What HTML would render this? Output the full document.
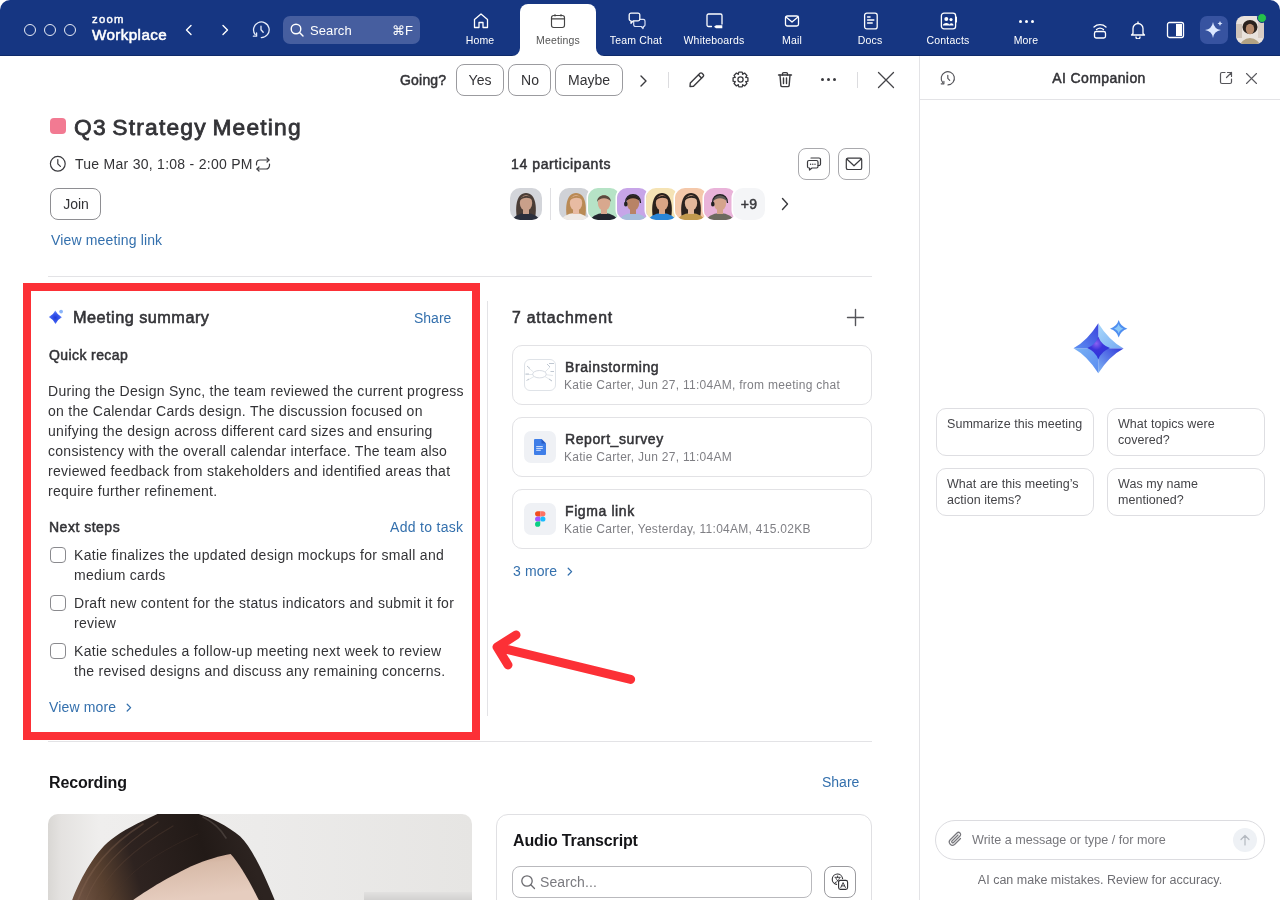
<!DOCTYPE html>
<html><head><meta charset="utf-8">
<style>
html,body{margin:0;padding:0;background:#fff;}
body{width:1280px;height:900px;overflow:hidden;position:relative;font-family:"Liberation Sans", sans-serif;}
.t{position:absolute;white-space:pre;line-height:1;will-change:transform;}
svg{display:block;}
</style></head><body>
<div style="position:absolute;left:0px;top:0px;width:1280px;height:56px;background:#163682;border-radius:10px 10px 0 0;"></div><div style="position:absolute;left:0px;top:55px;width:1280px;height:1px;background:#0f2a6a;"></div><div style="position:absolute;left:24px;top:24px;width:12px;height:12px;box-sizing:border-box;border:1.3px solid #e8ecf6;border-radius:50%;"></div><div style="position:absolute;left:44px;top:24px;width:12px;height:12px;box-sizing:border-box;border:1.3px solid #e8ecf6;border-radius:50%;"></div><div style="position:absolute;left:64px;top:24px;width:12px;height:12px;box-sizing:border-box;border:1.3px solid #e8ecf6;border-radius:50%;"></div><div class="t" style="left:92.30px;top:14.23px;font-size:11.3px;color:#fff;-webkit-text-stroke:0.40px #fff;letter-spacing:1.3px;">zoom</div><div class="t" style="left:92.30px;top:26.53px;font-size:15.2px;color:#fff;-webkit-text-stroke:0.54px #fff;letter-spacing:0.4px;">Workplace</div><svg style="position:absolute;left:184px;top:24px;" width="10" height="12" viewBox="0 0 10 12" fill="none"><path d="M7 1.5 L2.5 6 L7 10.5" stroke="#fff" stroke-width="1.4" stroke-linecap="round" stroke-linejoin="round"/></svg><svg style="position:absolute;left:220px;top:24px;" width="10" height="12" viewBox="0 0 10 12" fill="none"><path d="M3 1.5 L7.5 6 L3 10.5" stroke="#fff" stroke-width="1.4" stroke-linecap="round" stroke-linejoin="round"/></svg><svg style="position:absolute;left:252px;top:21px;" width="18" height="18" viewBox="0 0 18 18" fill="none"><path d="M9.3 16.6 A7.8 7.8 0 1 0 3.2 13.6" stroke="#e6ecfa" stroke-width="1.3" stroke-linecap="round" stroke-linejoin="round"/><path d="M1.4 15.2 H4.6 V12" stroke="#e6ecfa" stroke-width="1.3" stroke-linecap="round" stroke-linejoin="round"/><path d="M9 5.2 V8.7 L11.2 11.2" stroke="#e6ecfa" stroke-width="1.3" stroke-linecap="round" stroke-linejoin="round"/></svg><div style="position:absolute;left:283px;top:16px;width:137px;height:28px;background:#465e9f;border-radius:7px;"></div><svg style="position:absolute;left:289px;top:22px;" width="16" height="16" viewBox="0 0 16 16" fill="none"><circle cx="7" cy="7" r="4.8" stroke="#fff" stroke-width="1.4" stroke-linecap="round" stroke-linejoin="round"/><path d="M10.5 10.5 L14 14" stroke="#fff" stroke-width="1.4" stroke-linecap="round" stroke-linejoin="round"/></svg><div class="t" style="left:309.50px;top:23.80px;font-size:13px;color:#fff;letter-spacing:0.1px;">Search</div><div class="t" style="left:392.00px;top:23.80px;font-size:13px;color:#fff;">⌘F</div><div style="position:absolute;left:520px;top:4px;width:76px;height:52px;background:#fff;border-radius:8px 8px 0 0;"></div><svg style="position:absolute;left:512px;top:47px;" width="8" height="9" viewBox="0 0 8 9" fill="none"><path d="M8 0 V9 H0 A8 8 0 0 0 8 1 Z" fill="#fff"/></svg><svg style="position:absolute;left:596px;top:47px;" width="8" height="9" viewBox="0 0 8 9" fill="none"><path d="M0 0 V9 H8 A8 8 0 0 1 0 1 Z" fill="#fff"/></svg><div class="t" style="left:480.00px;transform:translateX(-50%);top:35.31px;font-size:10.5px;color:#fff;letter-spacing:0.18px;">Home</div><div class="t" style="left:558.00px;transform:translateX(-50%);top:35.31px;font-size:10.5px;color:#555;letter-spacing:0.18px;">Meetings</div><div class="t" style="left:636.00px;transform:translateX(-50%);top:35.31px;font-size:10.5px;color:#fff;letter-spacing:0.18px;">Team Chat</div><div class="t" style="left:714.00px;transform:translateX(-50%);top:35.31px;font-size:10.5px;color:#fff;letter-spacing:0.18px;">Whiteboards</div><div class="t" style="left:792.00px;transform:translateX(-50%);top:35.31px;font-size:10.5px;color:#fff;letter-spacing:0.18px;">Mail</div><div class="t" style="left:870.00px;transform:translateX(-50%);top:35.31px;font-size:10.5px;color:#fff;letter-spacing:0.18px;">Docs</div><div class="t" style="left:948.00px;transform:translateX(-50%);top:35.31px;font-size:10.5px;color:#fff;letter-spacing:0.18px;">Contacts</div><div class="t" style="left:1026.00px;transform:translateX(-50%);top:35.31px;font-size:10.5px;color:#fff;letter-spacing:0.18px;">More</div><svg style="position:absolute;left:473px;top:13px;" width="16" height="16" viewBox="0 0 16 16" fill="none"><path d="M1.5 6.5 L8 1 L14.5 6.5 V14.5 H10 V9.5 H6 V14.5 H1.5 Z" stroke="#fff" stroke-width="1.3" stroke-linecap="round" stroke-linejoin="round"/></svg><svg style="position:absolute;left:550px;top:13px;" width="16" height="16" viewBox="0 0 16 16" fill="none"><rect x="1.5" y="2.5" width="13" height="12" rx="2.2" stroke="#444" stroke-width="1.15" stroke-linecap="round" stroke-linejoin="round"/><path d="M1.5 5.8 H14.5" stroke="#444" stroke-width="1.15" stroke-linecap="round" stroke-linejoin="round"/><path d="M5 1.5 V3 M11 1.5 V3" stroke="#444" stroke-width="1.15" stroke-linecap="round" stroke-linejoin="round"/></svg><svg style="position:absolute;left:627px;top:12px;" width="20" height="18" viewBox="0 0 20 18" fill="none"><path d="M8.5 7.3 H16.2 A1.8 1.8 0 0 1 18 9.1 V12.7 A1.8 1.8 0 0 1 16.2 14.5 H16.5 L16 16.6 L14.3 14.5 H8.5 A1.8 1.8 0 0 1 6.7 12.7 V9.1 A1.8 1.8 0 0 1 8.5 7.3 Z" stroke="#d8e0f5" stroke-width="1.2" stroke-linecap="round" stroke-linejoin="round"/><path d="M4 1.1 H11 A1.8 1.8 0 0 1 12.8 2.9 V7.1 A1.8 1.8 0 0 1 11 8.9 H6.2 L4 11.3 V8.9 A1.8 1.8 0 0 1 2.2 7.1 V2.9 A1.8 1.8 0 0 1 4 1.1 Z" fill="#163682" stroke="#fff" stroke-width="1.3" stroke-linecap="round" stroke-linejoin="round"/></svg><svg style="position:absolute;left:705px;top:13px;" width="19" height="16" viewBox="0 0 19 16" fill="none"><path d="M6.5 13.5 H3.5 A1.5 1.5 0 0 1 2 12 V2.5 A1.5 1.5 0 0 1 3.5 1 H15.5 A1.5 1.5 0 0 1 17 2.5 V11" stroke="#fff" stroke-width="1.3" stroke-linecap="round" stroke-linejoin="round"/><path d="M9 13.8 L11 12.2 H17.3 V15.3 H11 Z" fill="#fff"/></svg><svg style="position:absolute;left:784px;top:14px;" width="16" height="14" viewBox="0 0 16 14" fill="none"><rect x="1.5" y="2" width="13" height="10" rx="1.8" stroke="#fff" stroke-width="1.3" stroke-linecap="round" stroke-linejoin="round"/><path d="M2 3 L8 8 L14 3" stroke="#fff" stroke-width="1.3" stroke-linecap="round" stroke-linejoin="round"/></svg><svg style="position:absolute;left:863px;top:12px;" width="16" height="18" viewBox="0 0 16 18" fill="none"><rect x="1.6" y="1.1" width="12.6" height="15.8" rx="2.2" stroke="#fff" stroke-width="1.3" stroke-linecap="round" stroke-linejoin="round"/><path d="M4.6 5 H7 M4.6 8 H10.8 M4.6 11 H9.2" stroke="#fff" stroke-width="1.5" stroke-linecap="round" stroke-linejoin="round"/></svg><svg style="position:absolute;left:940px;top:12px;" width="18" height="18" viewBox="0 0 18 18" fill="none"><rect x="1.4" y="1.1" width="14.2" height="15.8" rx="2.6" stroke="#fff" stroke-width="1.3" stroke-linecap="round" stroke-linejoin="round"/><path d="M16.4 5 V10" stroke="#fff" stroke-width="1.2" stroke-linecap="round" stroke-linejoin="round"/><circle cx="6.3" cy="7" r="2" fill="#fff"/><circle cx="11" cy="7.6" r="1.6" fill="#fff"/><path d="M2.8 13.5 C2.8 10 9.8 10 9.8 13.5 Z" fill="#fff"/><path d="M9.2 13.5 C9.2 10.5 13.5 10.5 13.5 13.5 Z" fill="#fff"/></svg><div style="position:absolute;left:1018.5px;top:19.5px;width:3px;height:3px;background:#fff;border-radius:50%;"></div><div style="position:absolute;left:1024.5px;top:19.5px;width:3px;height:3px;background:#fff;border-radius:50%;"></div><div style="position:absolute;left:1030.5px;top:19.5px;width:3px;height:3px;background:#fff;border-radius:50%;"></div><svg style="position:absolute;left:1092px;top:20px;" width="16" height="20" viewBox="0 0 16 20" fill="none"><path d="M2 7 A9 9 0 0 1 14 7" stroke="#fff" stroke-width="1.3" stroke-linecap="round" stroke-linejoin="round"/><path d="M4.5 9.5 A5.5 5.5 0 0 1 11.5 9.5" stroke="#fff" stroke-width="1.3" stroke-linecap="round" stroke-linejoin="round"/><rect x="2.5" y="11.5" width="11" height="6.5" rx="1.8" stroke="#fff" stroke-width="1.3" stroke-linecap="round" stroke-linejoin="round"/></svg><svg style="position:absolute;left:1129px;top:20px;" width="18" height="19" viewBox="0 0 18 19" fill="none"><path d="M4 13.5 V8.5 A5 5 0 0 1 14 8.5 V13.5 L15.5 15 H2.5 Z" stroke="#fff" stroke-width="1.3" stroke-linecap="round" stroke-linejoin="round"/><path d="M7 17 A2 2 0 0 0 11 17" stroke="#fff" stroke-width="1.3" stroke-linecap="round" stroke-linejoin="round"/><path d="M9 2 V3.5" stroke="#fff" stroke-width="1.3" stroke-linecap="round" stroke-linejoin="round"/></svg><svg style="position:absolute;left:1166px;top:21px;" width="19" height="18" viewBox="0 0 19 18" fill="none"><rect x="1.5" y="1.5" width="16" height="15" rx="2" stroke="#fff" stroke-width="1.3" stroke-linecap="round" stroke-linejoin="round"/><rect x="10" y="3" width="6" height="12" fill="#fff"/></svg><div style="position:absolute;left:1200px;top:16px;width:28px;height:28px;background:#3753a0;border-radius:7px;"></div><svg style="position:absolute;left:1203px;top:19px;" width="22" height="22" viewBox="0 0 22 22" fill="none"><path d="M10 3 Q11 10 18 11 Q11 12 10 19 Q9 12 2 11 Q9 10 10 3 Z" fill="#dce8ff"/><path d="M17 2 Q17.4 4.2 19.5 4.5 Q17.4 4.8 17 7 Q16.6 4.8 14.5 4.5 Q16.6 4.2 17 2 Z" fill="#dce8ff"/></svg><div style="position:absolute;left:1236px;top:16px;width:28px;height:28px;border-radius:8px;overflow:hidden;"><svg width="28" height="28" viewBox="0 0 28 28"><rect width="28" height="28" fill="#e9e2dc"/><rect x="0" y="8" width="6" height="14" fill="#cfc3b8"/><rect x="22" y="6" width="6" height="16" fill="#d8cdc4"/><ellipse cx="14" cy="11" rx="7.5" ry="7" fill="#2a211d"/><ellipse cx="14" cy="31" rx="10" ry="9" fill="#b3a283"/><ellipse cx="14" cy="13" rx="4.2" ry="5.2" fill="#b68a6c"/></svg></div><div style="position:absolute;left:1257px;top:13px;width:10px;height:10px;background:#25c24a;border-radius:50%;border:1.5px solid #163682;box-sizing:border-box;"></div><div style="position:absolute;left:919px;top:56px;width:1px;height:844px;background:#e3e3e6;"></div><div class="t" style="left:399.50px;top:73.15px;font-size:14px;color:#333337;-webkit-text-stroke:0.50px #333337;letter-spacing:0.2px;">Going?</div><div style="position:absolute;left:456px;top:64px;width:48px;height:32px;box-sizing:border-box;border:1px solid #9b9b9f;border-radius:8px;"></div><div class="t" style="left:480.00px;transform:translateX(-50%);top:73.15px;font-size:14px;color:#333336;">Yes</div><div style="position:absolute;left:508px;top:64px;width:43px;height:32px;box-sizing:border-box;border:1px solid #9b9b9f;border-radius:8px;"></div><div class="t" style="left:529.50px;transform:translateX(-50%);top:73.15px;font-size:14px;color:#333336;">No</div><div style="position:absolute;left:555px;top:64px;width:68px;height:32px;box-sizing:border-box;border:1px solid #9b9b9f;border-radius:8px;"></div><div class="t" style="left:589.00px;transform:translateX(-50%);top:73.15px;font-size:14px;color:#333336;">Maybe</div><svg style="position:absolute;left:637px;top:74px;" width="12" height="14" viewBox="0 0 12 14" fill="none"><path d="M4 2 L9 7 L4 12" stroke="#3a3a3e" stroke-width="1.4" stroke-linecap="round" stroke-linejoin="round"/></svg><div style="position:absolute;left:668px;top:72px;width:1px;height:16px;background:#dcdcdf;"></div><div style="position:absolute;left:857px;top:72px;width:1px;height:16px;background:#dcdcdf;"></div><svg style="position:absolute;left:687px;top:71px;" width="19" height="18" viewBox="0 0 19 18" fill="none"><path d="M3 15.5 L3.3 12 L13 2.3 A1.4 1.4 0 0 1 15 2.3 L16.2 3.5 A1.4 1.4 0 0 1 16.2 5.5 L6.5 15.2 Z" stroke="#3a3a3e" stroke-width="1.4" stroke-linecap="round" stroke-linejoin="round"/><path d="M11.5 4 L14.5 7" stroke="#3a3a3e" stroke-width="1.4" stroke-linecap="round" stroke-linejoin="round"/></svg><svg style="position:absolute;left:732px;top:71px;" width="17" height="17" viewBox="0 0 17 17" fill="none"><path d="M15.92 6.84 L15.92 10.16 L13.70 10.82 L13.82 10.54 L14.92 12.57 L12.57 14.92 L10.54 13.82 L10.82 13.70 L10.16 15.92 L6.84 15.92 L6.18 13.70 L6.46 13.82 L4.43 14.92 L2.08 12.57 L3.18 10.54 L3.30 10.82 L1.08 10.16 L1.08 6.84 L3.30 6.18 L3.18 6.46 L2.08 4.43 L4.43 2.08 L6.46 3.18 L6.18 3.30 L6.84 1.08 L10.16 1.08 L10.82 3.30 L10.54 3.18 L12.57 2.08 L14.92 4.43 L13.82 6.46 L13.70 6.18 Z" stroke="#3a3a3e" stroke-width="1.3" stroke-linecap="round" stroke-linejoin="round"/><circle cx="8.5" cy="8.5" r="2.6" stroke="#3a3a3e" stroke-width="1.3" stroke-linecap="round" stroke-linejoin="round"/></svg><svg style="position:absolute;left:777px;top:71px;" width="16" height="17" viewBox="0 0 16 17" fill="none"><path d="M1.5 4 H14.5" stroke="#3a3a3e" stroke-width="1.4" stroke-linecap="round" stroke-linejoin="round"/><path d="M5.5 4 V2.8 A1.2 1.2 0 0 1 6.7 1.6 H9.3 A1.2 1.2 0 0 1 10.5 2.8 V4" stroke="#3a3a3e" stroke-width="1.4" stroke-linecap="round" stroke-linejoin="round"/><path d="M3 4 L3.8 14.3 A1.5 1.5 0 0 0 5.3 15.6 H10.7 A1.5 1.5 0 0 0 12.2 14.3 L13 4" stroke="#3a3a3e" stroke-width="1.4" stroke-linecap="round" stroke-linejoin="round"/><path d="M6.5 7 V12.5 M9.5 7 V12.5" stroke="#3a3a3e" stroke-width="1.4" stroke-linecap="round" stroke-linejoin="round"/></svg><div style="position:absolute;left:820.9px;top:78.2px;width:3.2px;height:3.2px;background:#3a3a3e;border-radius:50%;"></div><div style="position:absolute;left:826.9px;top:78.2px;width:3.2px;height:3.2px;background:#3a3a3e;border-radius:50%;"></div><div style="position:absolute;left:832.9px;top:78.2px;width:3.2px;height:3.2px;background:#3a3a3e;border-radius:50%;"></div><svg style="position:absolute;left:877px;top:71px;" width="18" height="18" viewBox="0 0 18 18" fill="none"><path d="M1.5 1.5 L16.5 16.5 M16.5 1.5 L1.5 16.5" stroke="#444448" stroke-width="1.3" stroke-linecap="round" stroke-linejoin="round"/></svg><div style="position:absolute;left:50px;top:118px;width:16px;height:16px;background:#f27a92;border-radius:4px;"></div><div class="t" style="left:74.30px;top:116.00px;font-size:22.8px;color:#333337;-webkit-text-stroke:0.81px #333337;letter-spacing:1.2px;word-spacing:-2px;">Q3 Strategy Meeting</div><svg style="position:absolute;left:49px;top:155px;" width="18" height="18" viewBox="0 0 18 18" fill="none"><circle cx="8.8" cy="8.8" r="7.4" stroke="#3a3a3e" stroke-width="1.2" stroke-linecap="round" stroke-linejoin="round"/><path d="M8.8 4.6 V8.8 L11.4 11.4" stroke="#3a3a3e" stroke-width="1.2" stroke-linecap="round" stroke-linejoin="round"/></svg><div class="t" style="left:75.20px;top:156.85px;font-size:14px;color:#333336;letter-spacing:0.27px;">Tue Mar 30, 1:08 - 2:00 PM</div><svg style="position:absolute;left:254px;top:157px;" width="18" height="15" viewBox="0 0 18 15" fill="none"><path d="M2.5 8 V6.5 A3.5 3.5 0 0 1 6 3 H15" stroke="#3a3a3e" stroke-width="1.2" stroke-linecap="round" stroke-linejoin="round"/><path d="M13 1 L15 3 L13 5" stroke="#3a3a3e" stroke-width="1.2" stroke-linecap="round" stroke-linejoin="round"/><path d="M15.5 7 V8.5 A3.5 3.5 0 0 1 12 12 H3" stroke="#3a3a3e" stroke-width="1.2" stroke-linecap="round" stroke-linejoin="round"/><path d="M5 10 L3 12 L5 14" stroke="#3a3a3e" stroke-width="1.2" stroke-linecap="round" stroke-linejoin="round"/></svg><div style="position:absolute;left:50px;top:188px;width:51px;height:32px;box-sizing:border-box;border:1px solid #8e8e92;border-radius:8px;"></div><div class="t" style="left:75.50px;transform:translateX(-50%);top:197.15px;font-size:14px;color:#333336;">Join</div><div class="t" style="left:51.00px;top:232.95px;font-size:14px;color:#3470ad;letter-spacing:0.15px;">View meeting link</div><div class="t" style="left:510.60px;top:156.95px;font-size:14px;color:#333337;-webkit-text-stroke:0.50px #333337;letter-spacing:0.6px;">14 participants</div><div style="position:absolute;left:798px;top:148px;width:32px;height:32px;box-sizing:border-box;border:1px solid #a9a9ad;border-radius:8px;"></div><div style="position:absolute;left:838px;top:148px;width:32px;height:32px;box-sizing:border-box;border:1px solid #a9a9ad;border-radius:8px;"></div><svg style="position:absolute;left:805px;top:155px;" width="18" height="18" viewBox="0 0 18 18" fill="none"><path d="M6 3 H14 A1.5 1.5 0 0 1 15.5 4.5 V9 A1.5 1.5 0 0 1 14 10.5 H13" stroke="#3a3a3e" stroke-width="1.2" stroke-linecap="round" stroke-linejoin="round"/><path d="M4 5.5 H11.5 A1.5 1.5 0 0 1 13 7 V11.5 A1.5 1.5 0 0 1 11.5 13 H7 L4.5 15 V13 H4 A1.5 1.5 0 0 1 2.5 11.5 V7 A1.5 1.5 0 0 1 4 5.5 Z" stroke="#3a3a3e" stroke-width="1.2" stroke-linecap="round" stroke-linejoin="round"/><circle cx="5.6" cy="9.3" r="0.7" fill="#3a3a3e"/><circle cx="7.8" cy="9.3" r="0.7" fill="#3a3a3e"/><circle cx="10" cy="9.3" r="0.7" fill="#3a3a3e"/></svg><svg style="position:absolute;left:845px;top:156px;" width="18" height="16" viewBox="0 0 18 16" fill="none"><rect x="1.3" y="2.1" width="15.4" height="11.4" rx="1.6" stroke="#3a3a3e" stroke-width="1.2" stroke-linecap="round" stroke-linejoin="round"/><path d="M1.8 3 L9 9.8 L16.2 3" stroke="#3a3a3e" stroke-width="1.2" stroke-linecap="round" stroke-linejoin="round"/></svg><div style="position:absolute;left:550px;top:188px;width:1px;height:32px;background:#e0e0e3;"></div><div style="position:absolute;left:48px;top:276px;width:824px;height:1px;background:#e3e3e6;"></div><div style="position:absolute;left:510px;top:188px;width:32px;height:32px;border-radius:10px;overflow:hidden;"><svg width="32" height="32" viewBox="0 0 32 32"><rect width="32" height="32" fill="#d3d5da"/><path d="M7 30 C5 20 6 5 16 5 C26 5 27 20 25 30 Z" fill="#4a3d36"/><ellipse cx="16" cy="34" rx="14" ry="9" fill="#2a2f3c"/><rect x="13" y="20" width="6" height="6" fill="#c9a08a"/><ellipse cx="16" cy="15" rx="6.2" ry="7.8" fill="#c9a08a"/><path d="M9.5 13 C10 7 22 6 22.5 12 C19 9 13 9 9.5 13 Z" fill="#4a3d36"/></svg></div><div style="position:absolute;left:559px;top:188px;width:32px;height:32px;border-radius:10px;overflow:hidden;box-shadow:0 0 0 1.5px #fff;"><svg width="32" height="32" viewBox="0 0 32 32"><rect width="32" height="32" fill="#d0d2d7"/><path d="M8 30 C6 20 7 5 17 5 C27 5 28 20 26 30 Z" fill="#b98a55"/><ellipse cx="16" cy="34" rx="14" ry="9" fill="#efeae6"/><rect x="14" y="20" width="6" height="6" fill="#e8bba2"/><ellipse cx="17" cy="15" rx="6.2" ry="7.8" fill="#e8bba2"/><path d="M10.5 13 C11 7 23 6 23.5 12 C20 9 14 9 10.5 13 Z" fill="#b98a55"/></svg></div><div style="position:absolute;left:588px;top:188px;width:32px;height:32px;border-radius:10px;overflow:hidden;box-shadow:0 0 0 1.5px #fff;"><svg width="32" height="32" viewBox="0 0 32 32"><rect width="32" height="32" fill="#b6e3c6"/><ellipse cx="16" cy="34" rx="14" ry="9" fill="#23272f"/><rect x="13" y="20" width="6" height="6" fill="#d8a88e"/><ellipse cx="16" cy="15" rx="6.2" ry="7.8" fill="#d8a88e"/><path d="M9.2 14 C8.5 5 23.5 5 22.8 14 C21 9 11 9 9.2 14 Z" fill="#5b4a3e"/></svg></div><div style="position:absolute;left:617px;top:188px;width:32px;height:32px;border-radius:10px;overflow:hidden;box-shadow:0 0 0 1.5px #fff;"><svg width="32" height="32" viewBox="0 0 32 32"><rect width="32" height="32" fill="#c7a5e8"/><ellipse cx="16" cy="34" rx="14" ry="9" fill="#a7bddb"/><rect x="13" y="20" width="6" height="6" fill="#b88366"/><ellipse cx="16" cy="15" rx="6.2" ry="7.8" fill="#b88366"/><path d="M9.2 14 C8.5 5 23.5 5 22.8 14 C21 9 11 9 9.2 14 Z" fill="#2b221e"/><path d="M8.5 15 C8 4 24 4 23.5 15" stroke="#222" stroke-width="1.3" fill="none"/><ellipse cx="8.8" cy="16" rx="1.8" ry="2.6" fill="#222"/></svg></div><div style="position:absolute;left:646px;top:188px;width:32px;height:32px;border-radius:10px;overflow:hidden;box-shadow:0 0 0 1.5px #fff;"><svg width="32" height="32" viewBox="0 0 32 32"><rect width="32" height="32" fill="#f5e3b4"/><path d="M7 30 C5 20 6 5 16 5 C26 5 27 20 25 30 Z" fill="#2a211c"/><ellipse cx="16" cy="34" rx="14" ry="9" fill="#2a86d8"/><rect x="13" y="20" width="6" height="6" fill="#d9a585"/><ellipse cx="16" cy="15" rx="6.2" ry="7.8" fill="#d9a585"/><path d="M9.5 13 C10 7 22 6 22.5 12 C19 9 13 9 9.5 13 Z" fill="#2a211c"/></svg></div><div style="position:absolute;left:675px;top:188px;width:32px;height:32px;border-radius:10px;overflow:hidden;box-shadow:0 0 0 1.5px #fff;"><svg width="32" height="32" viewBox="0 0 32 32"><rect width="32" height="32" fill="#f4c8aa"/><path d="M7 30 C5 20 6 5 16 5 C26 5 27 20 25 30 Z" fill="#2b231f"/><ellipse cx="16" cy="34" rx="14" ry="9" fill="#c29a4e"/><rect x="13" y="20" width="6" height="6" fill="#e3b89b"/><ellipse cx="16" cy="15" rx="6.2" ry="7.8" fill="#e3b89b"/><path d="M9.5 13 C10 7 22 6 22.5 12 C19 9 13 9 9.5 13 Z" fill="#2b231f"/></svg></div><div style="position:absolute;left:704px;top:188px;width:32px;height:32px;border-radius:10px;overflow:hidden;box-shadow:0 0 0 1.5px #fff;"><svg width="32" height="32" viewBox="0 0 32 32"><rect width="32" height="32" fill="#e9b3d9"/><ellipse cx="16" cy="34" rx="14" ry="9" fill="#6d6a60"/><rect x="13" y="20" width="6" height="6" fill="#d5a48c"/><ellipse cx="16" cy="15" rx="6.2" ry="7.8" fill="#d5a48c"/><path d="M9.2 14 C8.5 5 23.5 5 22.8 14 C21 9 11 9 9.2 14 Z" fill="#5e5955"/><path d="M8.5 15 C8 4 24 4 23.5 15" stroke="#222" stroke-width="1.3" fill="none"/><ellipse cx="8.8" cy="16" rx="1.8" ry="2.6" fill="#222"/></svg></div><div style="position:absolute;left:733px;top:188px;width:32px;height:32px;border-radius:10px;background:#f4f5f7;box-shadow:0 0 0 1.5px #fff;"></div><div class="t" style="left:749.00px;transform:translateX(-50%);top:197.15px;font-size:14px;color:#3a3a3e;-webkit-text-stroke:0.50px #3a3a3e;letter-spacing:0.3px;">+9</div><svg style="position:absolute;left:779px;top:196px;" width="12" height="16" viewBox="0 0 12 16" fill="none"><path d="M3.5 2.5 L8.5 8 L3.5 13.5" stroke="#3a3a3e" stroke-width="1.4" stroke-linecap="round" stroke-linejoin="round"/></svg><div style="position:absolute;left:23px;top:283px;width:457px;height:457px;box-sizing:border-box;border:8px solid #fc3036;"></div><div style="position:absolute;left:487px;top:301px;width:1px;height:415px;background:#e3e3e6;"></div><div style="position:absolute;left:48px;top:741px;width:824px;height:1px;background:#e3e3e6;"></div><svg style="position:absolute;left:48px;top:308px;" width="17" height="17" viewBox="0 0 17 17" fill="none"><defs><radialGradient id="sg1" cx="0.5" cy="0.55" r="0.6"><stop offset="0" stop-color="#1f3ad8"/><stop offset="0.55" stop-color="#3c5cf0"/><stop offset="1" stop-color="#8fb0ff"/></radialGradient></defs><path d="M7.3 2.5 Q9.4 7 13.9 9.3 Q9.4 11.6 7.5 15.9 Q5.4 11.6 0.8 9.1 Q5.3 7 7.3 2.5 Z" fill="url(#sg1)"/><circle cx="13.1" cy="3.6" r="1.9" fill="#8ab4f8"/></svg><div class="t" style="left:72.50px;top:309.40px;font-size:16.3px;color:#333337;-webkit-text-stroke:0.58px #333337;letter-spacing:0.47px;">Meeting summary</div><div class="t" style="left:414.00px;top:310.65px;font-size:14px;color:#3470ad;">Share</div><div class="t" style="left:48.80px;top:348.35px;font-size:14px;color:#333337;-webkit-text-stroke:0.50px #333337;letter-spacing:0.4px;">Quick recap</div><div class="t" style="left:48.30px;top:383.75px;font-size:14px;color:#333336;letter-spacing:0.28px;">During the Design Sync, the team reviewed the current progress</div><div class="t" style="left:48.30px;top:403.75px;font-size:14px;color:#333336;letter-spacing:0.28px;">on the Calendar Cards design. The discussion focused on</div><div class="t" style="left:48.30px;top:423.75px;font-size:14px;color:#333336;letter-spacing:0.28px;">unifying the design across different card sizes and ensuring</div><div class="t" style="left:48.30px;top:443.75px;font-size:14px;color:#333336;letter-spacing:0.28px;">consistency with the overall calendar interface. The team also</div><div class="t" style="left:48.30px;top:463.75px;font-size:14px;color:#333336;letter-spacing:0.28px;">reviewed feedback from stakeholders and identified areas that</div><div class="t" style="left:48.30px;top:483.75px;font-size:14px;color:#333336;letter-spacing:0.28px;">require further refinement.</div><div class="t" style="left:48.80px;top:520.15px;font-size:14px;color:#333337;-webkit-text-stroke:0.50px #333337;letter-spacing:0.5px;">Next steps</div><div class="t" style="right:817.00px;top:520.15px;font-size:14px;color:#3470ad;letter-spacing:0.3px;">Add to task</div><div style="position:absolute;left:50px;top:546.7px;width:16px;height:16px;box-sizing:border-box;border:1.2px solid #8a8a8e;border-radius:4px;"></div><div class="t" style="left:74.20px;top:548.15px;font-size:14px;color:#333336;letter-spacing:0.3px;">Katie finalizes the updated design mockups for small and</div><div class="t" style="left:74.20px;top:568.15px;font-size:14px;color:#333336;letter-spacing:0.3px;">medium cards</div><div style="position:absolute;left:50px;top:594.7px;width:16px;height:16px;box-sizing:border-box;border:1.2px solid #8a8a8e;border-radius:4px;"></div><div class="t" style="left:74.20px;top:596.15px;font-size:14px;color:#333336;letter-spacing:0.3px;">Draft new content for the status indicators and submit it for</div><div class="t" style="left:74.20px;top:616.15px;font-size:14px;color:#333336;letter-spacing:0.3px;">review</div><div style="position:absolute;left:50px;top:642.7px;width:16px;height:16px;box-sizing:border-box;border:1.2px solid #8a8a8e;border-radius:4px;"></div><div class="t" style="left:74.20px;top:644.15px;font-size:14px;color:#333336;letter-spacing:0.3px;">Katie schedules a follow-up meeting next week to review</div><div class="t" style="left:74.20px;top:664.15px;font-size:14px;color:#333336;letter-spacing:0.3px;">the revised designs and discuss any remaining concerns.</div><div class="t" style="left:48.70px;top:700.05px;font-size:14px;color:#3470ad;letter-spacing:0.15px;">View more</div><svg style="position:absolute;left:124px;top:702px;" width="10" height="12" viewBox="0 0 10 12" fill="none"><path d="M3.2 2.2 L6.6 5.6 L3.2 9" stroke="#3470ad" stroke-width="1.3" stroke-linecap="round" stroke-linejoin="round"/></svg><div class="t" style="left:512.30px;top:309.63px;font-size:15.8px;color:#333337;-webkit-text-stroke:0.56px #333337;letter-spacing:0.8px;">7 attachment</div><svg style="position:absolute;left:846px;top:308px;" width="19" height="19" viewBox="0 0 19 19" fill="none"><path d="M9.5 1.5 V17.5 M1.5 9.5 H17.5" stroke="#55555a" stroke-width="1.4" stroke-linecap="round" stroke-linejoin="round"/></svg><div style="position:absolute;left:512px;top:345px;width:360px;height:60px;box-sizing:border-box;border:1px solid #e2e2e5;border-radius:10px;"></div><div class="t" style="left:564.80px;top:360.35px;font-size:14px;color:#333337;-webkit-text-stroke:0.50px #333337;letter-spacing:0.6px;">Brainstorming</div><div class="t" style="left:564.30px;top:378.84px;font-size:12px;color:#7f7f84;letter-spacing:0.28px;">Katie Carter, Jun 27, 11:04AM, from meeting chat</div><div style="position:absolute;left:512px;top:417px;width:360px;height:60px;box-sizing:border-box;border:1px solid #e2e2e5;border-radius:10px;"></div><div class="t" style="left:564.80px;top:432.35px;font-size:14px;color:#333337;-webkit-text-stroke:0.50px #333337;letter-spacing:0.6px;">Report_survey</div><div class="t" style="left:564.30px;top:450.84px;font-size:12px;color:#7f7f84;letter-spacing:0.28px;">Katie Carter, Jun 27, 11:04AM</div><div style="position:absolute;left:512px;top:489px;width:360px;height:60px;box-sizing:border-box;border:1px solid #e2e2e5;border-radius:10px;"></div><div class="t" style="left:564.80px;top:504.35px;font-size:14px;color:#333337;-webkit-text-stroke:0.50px #333337;letter-spacing:0.6px;">Figma link</div><div class="t" style="left:564.30px;top:522.84px;font-size:12px;color:#7f7f84;letter-spacing:0.28px;">Katie Carter, Yesterday, 11:04AM, 415.02KB</div><div style="position:absolute;left:524px;top:359px;width:32px;height:32px;box-sizing:border-box;border:1px solid #dfe3e8;border-radius:6px;background:#fff;"></div><svg style="position:absolute;left:524px;top:359px;" width="32" height="32" viewBox="0 0 32 32" fill="none"><ellipse cx="15.5" cy="15.2" rx="6.8" ry="3.7" stroke="#c5ccd5" stroke-width="0.7"/><path d="M9.5 13 L4 8.5 M8.8 15.5 H1.5 M10 17.5 L4 21 M21 13 L26 8 M22.3 15.8 L29 16.5 M21 17.5 L28 22" stroke="#d0d6de" stroke-width="0.6"/><path d="M3 7 L6 9.5 M1.5 15 H5 M2.5 21.5 L5 20 M23 5 L26 8 M25 4.5 H30 M26.5 12.5 H30 M25 20 L28 22" stroke="#bfc7d1" stroke-width="1"/></svg><div style="position:absolute;left:524px;top:431px;width:32px;height:32px;background:#eff1f5;border-radius:7px;"></div><svg style="position:absolute;left:534px;top:439px;" width="12" height="16" viewBox="0 0 12 16" fill="none"><path d="M0 1 A1 1 0 0 1 1 0 H7.5 L12 4.5 V15 A1 1 0 0 1 11 16 H1 A1 1 0 0 1 0 15 Z" fill="#3f7ee8"/><path d="M7.5 0 V4.5 H12 Z" fill="#2a5cc4"/><path d="M2.2 7.6 H8.8 M2.2 9.4 H8.8 M2.2 11.3 H6.8" stroke="#eaf1ff" stroke-width="0.9"/></svg><div style="position:absolute;left:524px;top:503px;width:32px;height:32px;background:#eff1f5;border-radius:7px;"></div><svg style="position:absolute;left:534.5px;top:511px;" width="11" height="16" viewBox="0 0 11 16" fill="none"><path d="M5.25 0.2 H2.65 A2.6 2.6 0 0 0 2.65 5.4 H5.25 Z" fill="#f24e1e"/><path d="M5.25 0.2 H7.85 A2.6 2.6 0 0 1 7.85 5.4 H5.25 Z" fill="#ff7262"/><path d="M5.25 5.4 H2.65 A2.6 2.6 0 0 0 2.65 10.6 H5.25 Z" fill="#a259ff"/><circle cx="7.85" cy="8" r="2.6" fill="#1abcfe"/><path d="M5.25 10.6 H2.65 A2.6 2.6 0 1 0 5.25 13.2 Z" fill="#0acf83"/></svg><div class="t" style="left:512.80px;top:564.05px;font-size:14px;color:#3470ad;letter-spacing:0.1px;">3 more</div><svg style="position:absolute;left:565px;top:566px;" width="10" height="12" viewBox="0 0 10 12" fill="none"><path d="M3.2 2.2 L6.6 5.6 L3.2 9" stroke="#3470ad" stroke-width="1.3" stroke-linecap="round" stroke-linejoin="round"/></svg><div class="t" style="left:48.70px;top:775.06px;font-size:16px;color:#151518;font-weight:700;letter-spacing:-0.15px;">Recording</div><div class="t" style="right:420.40px;top:775.15px;font-size:14px;color:#3470ad;">Share</div><svg style="position:absolute;left:48px;top:814px;" width="424" height="86" viewBox="0 0 424 86" fill="none"><defs><clipPath id="rc"><rect x="0" y="0" width="424" height="120" rx="10"/></clipPath><linearGradient id="rbg" x1="0" y1="0" x2="1" y2="0"><stop offset="0" stop-color="#d9d7d4"/><stop offset="0.03" stop-color="#e4e2e0"/><stop offset="0.12" stop-color="#efeeed"/><stop offset="0.5" stop-color="#ecebea"/><stop offset="1" stop-color="#e6e5e3"/></linearGradient><linearGradient id="rhair" gradientUnits="userSpaceOnUse" x1="30" y1="80" x2="200" y2="30"><stop offset="0" stop-color="#6e5242"/><stop offset="0.15" stop-color="#58402f"/><stop offset="0.35" stop-color="#2e2320"/><stop offset="0.75" stop-color="#221a17"/><stop offset="1" stop-color="#2c2320"/></linearGradient><linearGradient id="rskin" x1="0" y1="0" x2="0.3" y2="1"><stop offset="0" stop-color="#c29a86"/><stop offset="0.35" stop-color="#d8bba9"/><stop offset="1" stop-color="#e6cdbf"/></linearGradient></defs><g clip-path="url(#rc)"><rect width="424" height="86" fill="url(#rbg)"/><path d="M24.2 86 C31 68 45 40 62.6 26 C75 16 90 9 109.5 0 L150.8 0 C162 3 180 12 192 22.3 C203 33 214 55 226.7 86 Z" fill="url(#rhair)"/><g fill="none" stroke-linecap="round" opacity="0.35"><path d="M30 86 C40 58 60 32 95 10" stroke="#8c6c58" stroke-width="1.6"/><path d="M38 86 C48 60 70 34 110 8" stroke="#7a5c4a" stroke-width="1.2"/><path d="M48 86 C58 62 80 38 125 12" stroke="#5e4638" stroke-width="1.2"/><path d="M62 86 C75 64 100 42 150 20" stroke="#4a372e" stroke-width="1"/><path d="M155 3 C165 8 172 14 178 24" stroke="#7d726c" stroke-width="1.6"/></g><path d="M85.1 86 C98 77 115 66 143.3 52.3 C160 45 172 42 182.6 40 C190 48 200 64 210.8 86 Z" fill="url(#rskin)"/><path d="M316 78 H424 V86 H316 Z" fill="url(#rbar)"/><defs><linearGradient id="rbar" x1="0" y1="0" x2="0" y2="1"><stop offset="0" stop-color="#e2e1e0"/><stop offset="1" stop-color="#d2d1d0"/></linearGradient></defs></g></svg><div style="position:absolute;left:496px;top:814px;width:376px;height:120px;box-sizing:border-box;border:1px solid #e0e0e3;border-radius:12px;"></div><div class="t" style="left:513.00px;top:832.76px;font-size:16px;color:#151518;font-weight:700;letter-spacing:-0.15px;">Audio Transcript</div><div style="position:absolute;left:512px;top:866px;width:300px;height:32px;box-sizing:border-box;border:1px solid #b9b9bd;border-radius:8px;"></div><svg style="position:absolute;left:519px;top:873px;" width="18" height="18" viewBox="0 0 18 18" fill="none"><circle cx="8" cy="8" r="5.2" stroke="#6a6a6f" stroke-width="1.3" stroke-linecap="round" stroke-linejoin="round"/><path d="M11.8 11.8 L15.5 15.5" stroke="#6a6a6f" stroke-width="1.3" stroke-linecap="round" stroke-linejoin="round"/></svg><div class="t" style="left:540.00px;top:875.35px;font-size:14px;color:#7a7a7f;letter-spacing:0.1px;">Search...</div><div style="position:absolute;left:824px;top:866px;width:32px;height:32px;box-sizing:border-box;border:1px solid #9b9b9f;border-radius:8px;"></div><svg style="position:absolute;left:831px;top:873px;" width="18" height="18" viewBox="0 0 18 18" fill="none"><path d="M5.6 11.4 A5.2 5.2 0 1 1 11.6 5.6" stroke="#2f2f33" stroke-width="1.1" stroke-linecap="round" stroke-linejoin="round"/><path d="M4 4.3 H9.2 M6.6 3 V4.3 M4.8 5 C6 7.5 7.5 9 9 9.6 M8.6 5 C7.5 7.5 6 9 4.2 9.6" stroke="#2f2f33" stroke-width="0.9" stroke-linecap="round" stroke-linejoin="round"/><rect x="7.6" y="7.4" width="9" height="9" rx="1.8" fill="#fff" stroke="#2f2f33" stroke-width="1.1" stroke-linecap="round" stroke-linejoin="round"/><path d="M9.8 14.5 L12.1 9.6 L14.4 14.5 M10.7 12.9 H13.5" stroke="#2f2f33" stroke-width="0.9" stroke-linecap="round" stroke-linejoin="round"/></svg><div style="position:absolute;left:920px;top:99px;width:360px;height:1px;background:#e3e3e6;"></div><svg style="position:absolute;left:939px;top:70px;" width="18" height="18" viewBox="0 0 18 18" fill="none"><path d="M9 14.9 A6.6 6.6 0 1 0 3.74 12.54" stroke="#55555a" stroke-width="1.15" stroke-linecap="round" stroke-linejoin="round"/><path d="M2.2 13.8 H4.9 V11.2" stroke="#55555a" stroke-width="1.15" stroke-linecap="round" stroke-linejoin="round"/><path d="M8.8 5.3 V8.4 L10.7 10.4" stroke="#55555a" stroke-width="1.15" stroke-linecap="round" stroke-linejoin="round"/></svg><div class="t" style="left:1099.00px;transform:translateX(-50%);top:71.15px;font-size:14px;color:#333337;-webkit-text-stroke:0.50px #333337;letter-spacing:0.4px;">AI Companion</div><svg style="position:absolute;left:1218px;top:70px;" width="16" height="16" viewBox="0 0 16 16" fill="none"><path d="M7 2.5 H4 A1.5 1.5 0 0 0 2.5 4 V12 A1.5 1.5 0 0 0 4 13.5 H12 A1.5 1.5 0 0 0 13.5 12 V9" stroke="#55555a" stroke-width="1.2" stroke-linecap="round" stroke-linejoin="round"/><path d="M8.5 7.5 L13.5 2.5 M9.5 2.5 H13.5 V6.5" stroke="#55555a" stroke-width="1.2" stroke-linecap="round" stroke-linejoin="round"/></svg><svg style="position:absolute;left:1244px;top:71px;" width="15" height="15" viewBox="0 0 15 15" fill="none"><path d="M2.5 2.5 L12.5 12.5 M12.5 2.5 L2.5 12.5" stroke="#5a5a5f" stroke-width="1.1" stroke-linecap="round" stroke-linejoin="round"/></svg><svg style="position:absolute;left:1068px;top:316px;" width="64" height="62" viewBox="0 0 64 62" fill="none"><defs><radialGradient id="bgin" cx="0.4" cy="0.3" r="0.8"><stop offset="0" stop-color="#8a62f2"/><stop offset="0.35" stop-color="#3b35dc"/><stop offset="1" stop-color="#2536d8"/></radialGradient></defs><defs><linearGradient id="sf0" gradientUnits="userSpaceOnUse" x1="30.3" y1="7.2" x2="55.6" y2="32.4"><stop offset="0" stop-color="#a9d9fb"/><stop offset="1" stop-color="#76aaf2"/></linearGradient><linearGradient id="sf1" gradientUnits="userSpaceOnUse" x1="55.6" y1="32.4" x2="30.3" y2="57.3"><stop offset="0" stop-color="#3036da"/><stop offset="1" stop-color="#7fb6f4"/></linearGradient><linearGradient id="sf2" gradientUnits="userSpaceOnUse" x1="30.3" y1="57.3" x2="5.5" y2="32.2"><stop offset="0" stop-color="#5a8cf0"/><stop offset="1" stop-color="#7ab2f4"/></linearGradient><linearGradient id="sf3" gradientUnits="userSpaceOnUse" x1="5.5" y1="32.2" x2="30.3" y2="7.2"><stop offset="0" stop-color="#5c90f2"/><stop offset="1" stop-color="#3b42dd"/></linearGradient></defs><path d="M30.30 7.20 Q41.05 24.55 55.60 32.40 L30.30 32.30 Z" fill="url(#sf0)"/><path d="M55.60 32.40 Q41.05 40.05 30.30 57.30 L30.30 32.30 Z" fill="url(#sf1)"/><path d="M30.30 57.30 Q19.55 40.05 5.50 32.20 L30.30 32.30 Z" fill="url(#sf2)"/><path d="M5.50 32.20 Q19.55 24.55 30.30 7.20 L30.30 32.30 Z" fill="url(#sf3)"/><path d="M30.3 20.7 Q33.5 29 42 32.1 Q33.5 35.2 30.3 43.5 Q27.1 35.2 19.3 32.1 Q27.1 29 30.3 20.7 Z" fill="url(#bgin)"/><path d="M50.7 4 Q52.6 10.6 59.4 12.7 Q52.6 14.8 50.7 21.4 Q48.8 14.8 42 12.7 Q48.8 10.6 50.7 4 Z" fill="#4f8ef0"/><path d="M50.7 8 Q51.8 11.6 55.4 12.7 Q51.8 13.8 50.7 17.4 Q49.6 13.8 46 12.7 Q49.6 11.6 50.7 8 Z" fill="#8cc8f8"/></svg><div style="position:absolute;left:936px;top:408px;width:158px;height:48px;box-sizing:border-box;border:1px solid #dedee2;border-radius:10px;"></div><div class="t" style="left:946.70px;top:418.22px;font-size:12.5px;color:#444448;letter-spacing:0.05px;">Summarize this meeting</div><div style="position:absolute;left:1107px;top:408px;width:158px;height:48px;box-sizing:border-box;border:1px solid #dedee2;border-radius:10px;"></div><div class="t" style="left:1117.70px;top:418.22px;font-size:12.5px;color:#444448;letter-spacing:0.05px;">What topics were</div><div class="t" style="left:1117.70px;top:433.72px;font-size:12.5px;color:#444448;letter-spacing:0.05px;">covered?</div><div style="position:absolute;left:936px;top:468px;width:158px;height:48px;box-sizing:border-box;border:1px solid #dedee2;border-radius:10px;"></div><div class="t" style="left:946.70px;top:478.22px;font-size:12.5px;color:#444448;letter-spacing:0.05px;">What are this meeting’s</div><div class="t" style="left:946.70px;top:493.72px;font-size:12.5px;color:#444448;letter-spacing:0.05px;">action items?</div><div style="position:absolute;left:1107px;top:468px;width:158px;height:48px;box-sizing:border-box;border:1px solid #dedee2;border-radius:10px;"></div><div class="t" style="left:1117.70px;top:478.22px;font-size:12.5px;color:#444448;letter-spacing:0.05px;">Was my name</div><div class="t" style="left:1117.70px;top:493.72px;font-size:12.5px;color:#444448;letter-spacing:0.05px;">mentioned?</div><div style="position:absolute;left:935px;top:820px;width:330px;height:40px;box-sizing:border-box;border:1px solid #dcdce0;border-radius:20px;"></div><svg style="position:absolute;left:946px;top:830px;" width="20" height="20" viewBox="0 0 20 20" fill="none"><path d="M14.5 8.5 L8.5 14.5 A3.2 3.2 0 0 1 4 10 L11 3 A2.1 2.1 0 0 1 14 6 L7.5 12.5 A1 1 0 0 1 6 11 L12 5" stroke="#77777c" stroke-width="1.2" stroke-linecap="round" stroke-linejoin="round"/></svg><div class="t" style="left:972.00px;top:834.33px;font-size:12.6px;color:#77777c;">Write a message or type / for more</div><div style="position:absolute;left:1233px;top:828px;width:24px;height:24px;background:#eef1f5;border-radius:50%;"></div><svg style="position:absolute;left:1237px;top:832px;" width="16" height="16" viewBox="0 0 16 16" fill="none"><path d="M8 13 V3.5 M4 7.5 L8 3.5 L12 7.5" stroke="#b4b9c0" stroke-width="1.2" stroke-linecap="round" stroke-linejoin="round"/></svg><div class="t" style="left:1099.50px;transform:translateX(-50%);top:874.42px;font-size:12.5px;color:#6e6e73;">AI can make mistakes. Review for accuracy.</div><svg style="position:absolute;left:480px;top:620px;" width="170" height="75" viewBox="0 0 170 75" fill="none"><path d="M150.6 59.4 L17 27 M36 15 L17 27 L28 45" stroke="#fc3036" stroke-width="9" stroke-linecap="round" stroke-linejoin="round"/></svg>
</body></html>
